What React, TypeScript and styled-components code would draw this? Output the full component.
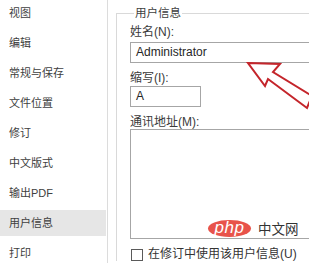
import React from "react";
import styled, { createGlobalStyle } from "styled-components";

const Global = createGlobalStyle`
  html, body { margin: 0; padding: 0; background: #fff; overflow: hidden; }
  body { font-family: "Liberation Sans", "Noto Sans CJK SC", sans-serif; color: #3c3c3c; }
  * { box-sizing: border-box; }
`;

const Page = styled.div`
  position: relative;
  display: flex;
  width: 309px;
  height: 263px;
  overflow: hidden;
`;

const Sidebar = styled.nav`
  flex: 0 0 108px;
  display: flex;
  flex-direction: column;
  gap: 4px;
  border-right: 1px solid #dcdcdc;
`;

const NavItem = styled.div<{ $active?: boolean }>`
  height: 26px;
  line-height: 26px;
  padding-left: 9px;
  font-size: 11px;
  color: #404040;
  background: ${(p) => (p.$active ? "#e6e6e6" : "transparent")};
  margin-right: 1px;
  white-space: nowrap;
`;

const Main = styled.main`
  flex: 1 0 auto;
  padding: 5px 0 0 8px;
`;

const Group = styled.fieldset`
  margin: 0;
  width: 260px;
  min-width: 0;
  padding: 0 0 0 13px;
  border: 1px solid #d9d9d9;
  border-right: none;
  border-bottom: none;
  display: flex;
  flex-direction: column;
`;

const Legend = styled.legend`
  padding: 0 1px;
  margin-left: 4px;
  font-size: 11.5px;
  line-height: 16px;
  color: #404040;
`;

const Label = styled.div<{ $top: number }>`
  margin-top: ${(p) => p.$top}px;
  font-size: 12px;
  line-height: 13px;
  color: #3a3a3a;
  white-space: nowrap;
`;

const TextBox = styled.div<{ $width: number; $top: number }>`
  margin-top: ${(p) => p.$top}px;
  width: ${(p) => p.$width}px;
  height: 21px;
  border: 1px solid #a6a6a6;
  padding-left: 5px;
  font-size: 12px;
  line-height: 19px;
  color: #262626;
  background: #fff;
`;

const TextArea = styled.div`
  width: 200px;
  height: 110px;
  border: 1px solid #a6a6a6;
  background: #fff;
`;

const CheckRow = styled.label`
  margin-top: 9px;
  margin-left: 1px;
  display: flex;
  align-items: center;
  gap: 5px;
  font-size: 12px;
  line-height: 13px;
  color: #333;
  white-space: nowrap;
`;

const CheckBox = styled.span`
  width: 12px;
  height: 12px;
  border: 1px solid #5a5a5a;
  background: #fff;
`;

const Arrow = styled.svg`
  position: absolute;
  left: 240px;
  top: 55px;
`;

const Watermark = styled.div`
  position: absolute;
  left: 208px;
  top: 220px;
  display: flex;
  align-items: center;
  gap: 7px;
`;

const PhpBadge = styled.span`
  width: 43px;
  height: 17px;
  border-radius: 50%;
  background: #e8534a;
  color: #fff;
  font-family: "Liberation Sans", sans-serif;
  font-style: italic;
  font-size: 17px;
  line-height: 15px;
  text-align: center;
  letter-spacing: 0.5px;
`;

const SiteName = styled.span`
  font-family: "Noto Sans CJK SC", sans-serif;
  font-size: 13.5px;
  line-height: 17px;
  color: #333;
`;

const items = ["视图", "编辑", "常规与保存", "文件位置", "修订", "中文版式", "输出PDF", "用户信息", "打印"];

export default function App() {
  return (
    <Page>
      <Global />
      <Sidebar>
        {items.map((t) => (
          <NavItem key={t} $active={t === "用户信息"}>
            {t}
          </NavItem>
        ))}
      </Sidebar>
      <Main>
        <Group>
          <Legend>用户信息</Legend>
          <Label $top={5}>姓名(N):</Label>
          <TextBox $width={240} $top={3}>Administrator</TextBox>
          <Label $top={9}>缩写(I):</Label>
          <TextBox $width={71} $top={1}>A</TextBox>
          <Label $top={9}>通讯地址(M):</Label>
          <TextArea />
          <CheckRow>
            <CheckBox />
            在修订中使用该用户信息(U)
          </CheckRow>
        </Group>
      </Main>
      <Arrow width="69" height="65" viewBox="240 55 69 65">
        <polygon
          points="248,63 280,64 273,72 312,96 307,108 268,79 265,86"
          fill="#fff"
          stroke="#c4252b"
          strokeWidth="2"
          strokeLinejoin="miter"
        />
      </Arrow>
      <Watermark>
        <PhpBadge>php</PhpBadge>
        <SiteName>中文网</SiteName>
      </Watermark>
    </Page>
  );
}
